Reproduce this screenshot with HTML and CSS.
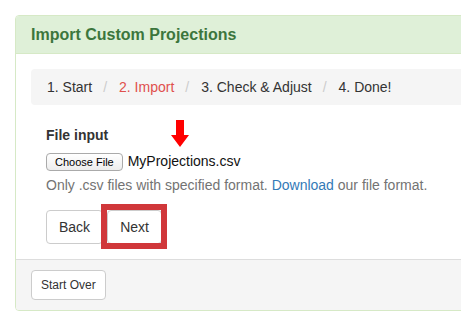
FILE: index.html
```html
<!DOCTYPE html>
<html lang="en">
<head>
    <meta charset="UTF-8">
    <title>Import Custom Projections</title>
    <link rel="stylesheet" href="styles.css">
</head>
<body>
    <div class="page">
        <div class="panel">
            <div class="panel-heading">
                <h3 class="panel-title">Import Custom Projections</h3>
            </div>

            <div class="panel-body">
                <!-- Wizard steps -->
                <ol class="breadcrumb">
                    <li>1. Start</li>
                    <li class="current">2. Import</li>
                    <li>3. Check &amp; Adjust</li>
                    <li>4. Done!</li>
                </ol>

                <div class="step">
                    <div class="form-group">
                        <label class="label">File input</label>
                        <div class="file-row">
                            <button class="file-btn">Choose File</button>
                            <span class="file-name">MyProjections.csv</span>
                            <svg class="arrow" width="18" height="27" viewBox="0 0 18 27">
                                <path d="M5 0 H13 V15 H18 L9 27 L0 15 H5 Z" fill="#f00"/>
                            </svg>
                        </div>
                        <p class="help-block">Only .csv files with specified format. <a href="#" class="link">Download</a> our file format.</p>
                    </div>

                    <div class="actions">
                        <button class="btn">Back</button>
                        <button class="btn highlight">Next</button>
                    </div>
                </div>
            </div>

            <div class="panel-footer">
                <button class="btn btn-sm">Start Over</button>
            </div>
        </div>
    </div>
</body>
</html>
```

FILE: styles.css
```css
* {
    margin: 0;
    padding: 0;
    box-sizing: border-box;
}

body {
    font-family: "Liberation Sans", Arial, sans-serif;
    font-size: 14px;
    line-height: 20px;
    color: #333;
    background: #fff;
    overflow: hidden;
}

.page {
    padding: 15px;
    width: 520px;
}

.panel {
    border: 1px solid #d6e9c6;
    border-radius: 4px;
    background: #fff;
}

.panel-heading {
    background-color: #dff0d8;
    border-bottom: 1px solid #d6e9c6;
    padding: 10px 15px;
    border-radius: 3px 3px 0 0;
}

.panel-title {
    font-size: 16px;
    font-weight: bold;
    line-height: 17px;
    color: #3c763d;
}

.panel-body {
    padding: 15px;
}

.breadcrumb {
    list-style: none;
    background-color: #f5f5f5;
    border-radius: 4px;
    padding: 8px 16px;
    margin-bottom: 20px;
    display: flex;
}

.breadcrumb li + li::before {
    content: "/";
    color: #ccc;
    padding: 0 12px 0 11px;
}

.breadcrumb .current {
    color: #e0504d;
}

.step {
    padding: 0 15px;
}

.form-group {
    margin-bottom: 15px;
}

.label {
    display: block;
    font-weight: bold;
    margin-top: 1px;
    margin-bottom: 5px;
}

.file-row {
    position: relative;
    display: flex;
    align-items: center;
    height: 21px;
}

.file-btn {
    font-family: "Liberation Sans", Arial, sans-serif;
    font-size: 11px;
    line-height: 14px;
    padding: 1px 8px;
    border: 1px solid #aaa;
    border-radius: 4px;
    background: linear-gradient(#fff, #ededed);
    color: #000;
    margin-right: 5px;
    margin-top: 3px;
}

.file-name {
    font-size: 14px;
    color: #111;
}

.arrow {
    position: absolute;
    left: 125px;
    top: -30px;
}

.help-block {
    color: #737373;
    margin-top: 4px;
    margin-bottom: 10px;
}

.link {
    color: #337ab7;
    text-decoration: none;
}

.actions {
    display: flex;
    gap: 4px;
}

.btn {
    font-family: "Liberation Sans", Arial, sans-serif;
    font-size: 14px;
    line-height: 20px;
    padding: 6px 12px;
    color: #333;
    background: #fff;
    border: 1px solid #ccc;
    border-radius: 4px;
}

.highlight {
    position: relative;
}

/* annotation box drawn over the Next button */
.highlight::after {
    content: "";
    position: absolute;
    top: -7px;
    left: -7px;
    right: -6px;
    bottom: -6px;
    border: 6px solid #d0373a;
}

.btn-sm {
    font-size: 12px;
    line-height: 18px;
    padding: 5px 9px;
}

.panel-footer {
    background-color: #f5f5f5;
    border-top: 1px solid #ddd;
    padding: 10px 15px;
    border-radius: 0 0 3px 3px;
}
```
